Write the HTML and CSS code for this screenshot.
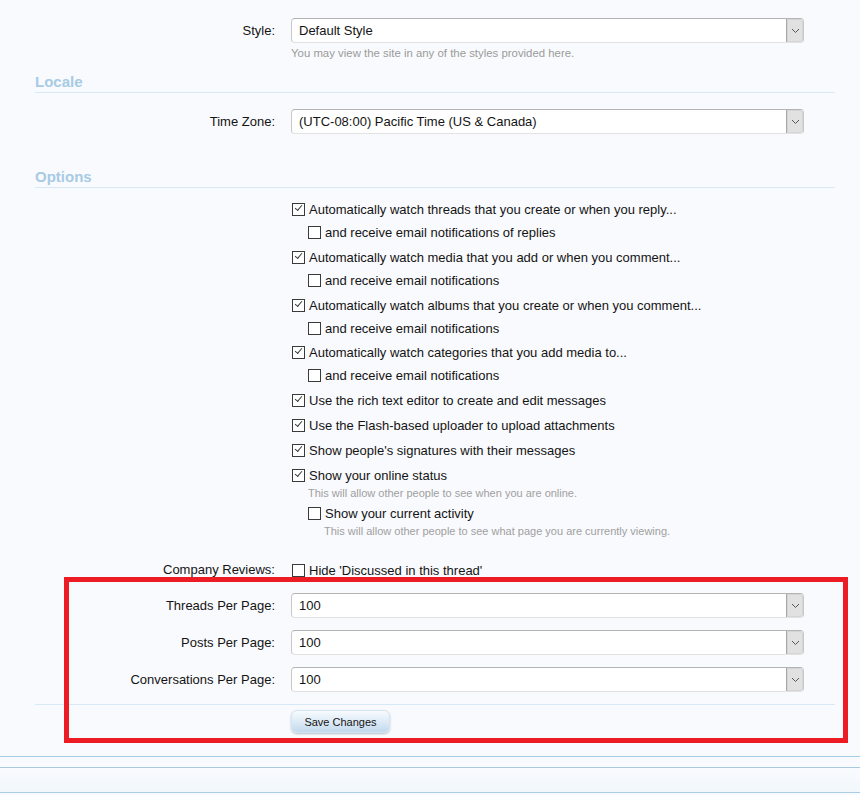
FILE: index.html
```html
<!DOCTYPE html>
<html lang="en">
<head>
<meta charset="utf-8">
<title>Preferences</title>
<link rel="stylesheet" href="styles.css">
</head>
<body>
<div class="page">
  <form class="prefs">
    <div class="row row-style">
      <div class="label">Style:</div>
      <div class="control">
        <div class="select"><span class="value">Default Style</span><span class="arrow"><svg width="9" height="6" viewBox="0 0 9 6"><path d="M1 1 L4.5 4.5 L8 1" fill="none" stroke="#555" stroke-width="1"/></svg></span></div>
        <p class="explain">You may view the site in any of the styles provided here.</p>
      </div>
    </div>

    <h3 class="section">Locale</h3>

    <div class="row row-tz">
      <div class="label">Time Zone:</div>
      <div class="control">
        <div class="select"><span class="value">(UTC-08:00) Pacific Time (US &amp; Canada)</span><span class="arrow"><svg width="9" height="6" viewBox="0 0 9 6"><path d="M1 1 L4.5 4.5 L8 1" fill="none" stroke="#555" stroke-width="1"/></svg></span></div>
      </div>
    </div>

    <h3 class="section section-options">Options</h3>

    <div class="row row-options">
      <div class="label"></div>
      <ul class="checks">
        <li class="check on"><span class="box"></span>Automatically watch threads that you create or when you reply...</li>
        <li class="check sub"><span class="box"></span>and receive email notifications of replies</li>
        <li class="check on"><span class="box"></span>Automatically watch media that you add or when you comment...</li>
        <li class="check sub"><span class="box"></span>and receive email notifications</li>
        <li class="check on"><span class="box"></span>Automatically watch albums that you create or when you comment...</li>
        <li class="check sub tight"><span class="box"></span>and receive email notifications</li>
        <li class="check on"><span class="box"></span>Automatically watch categories that you add media to...</li>
        <li class="check sub"><span class="box"></span>and receive email notifications</li>
        <li class="check on"><span class="box"></span>Use the rich text editor to create and edit messages</li>
        <li class="check on"><span class="box"></span>Use the Flash-based uploader to upload attachments</li>
        <li class="check on"><span class="box"></span>Show people's signatures with their messages</li>
        <li class="check on"><span class="box"></span>Show your online status</li>
        <li class="hint">This will allow other people to see when you are online.</li>
        <li class="check sub activity"><span class="box"></span>Show your current activity</li>
        <li class="hint sub">This will allow other people to see what page you are currently viewing.</li>
      </ul>
    </div>

    <div class="row row-reviews">
      <div class="label">Company Reviews:</div>
      <div class="control">
        <div class="check"><span class="box"></span>Hide 'Discussed in this thread'</div>
      </div>
    </div>

    <div class="row row-num">
      <div class="label">Threads Per Page:</div>
      <div class="control">
        <div class="select"><span class="value">100</span><span class="arrow"><svg width="9" height="6" viewBox="0 0 9 6"><path d="M1 1 L4.5 4.5 L8 1" fill="none" stroke="#555" stroke-width="1"/></svg></span></div>
      </div>
    </div>
    <div class="row row-num">
      <div class="label">Posts Per Page:</div>
      <div class="control">
        <div class="select"><span class="value">100</span><span class="arrow"><svg width="9" height="6" viewBox="0 0 9 6"><path d="M1 1 L4.5 4.5 L8 1" fill="none" stroke="#555" stroke-width="1"/></svg></span></div>
      </div>
    </div>
    <div class="row row-num">
      <div class="label">Conversations Per Page:</div>
      <div class="control">
        <div class="select"><span class="value">100</span><span class="arrow"><svg width="9" height="6" viewBox="0 0 9 6"><path d="M1 1 L4.5 4.5 L8 1" fill="none" stroke="#555" stroke-width="1"/></svg></span></div>
      </div>
    </div>

    <div class="submit">
      <div class="label"></div>
      <button type="button" class="button">Save Changes</button>
    </div>
  </form>

  <div class="footer-rule"></div>
  <div class="footer-band"></div>

  <div class="highlight"></div>
</div>
</body>
</html>
```

FILE: styles.css
```css
html, body {
  margin: 0;
  padding: 0;
  background: #f9fafd;
}

body {
  font-family: "Liberation Sans", Arial, sans-serif;
  font-size: 13px;
  color: #141414;
}

.page {
  position: relative;
  width: 860px;
  height: 795px;
  overflow: hidden;
}

.prefs {
  padding: 18px 25px 0 35px;
}

.row {
  display: grid;
  grid-template-columns: 240px 1fr;
  column-gap: 16px;
  align-items: start;
}

.label {
  text-align: right;
  line-height: 25px;
}

.control {
  width: 513px;
}

/* drop-down boxes */
.select {
  display: flex;
  height: 25px;
  box-sizing: border-box;
  background: #fff;
  border: 1px solid #c8c8c8;
  border-top-color: #b4b4b4;
  border-bottom-color: #e2e2e2;
  border-radius: 4px;
  overflow: hidden;
}

.select .value {
  flex: 1;
  line-height: 23px;
  padding-left: 7px;
}

.select .arrow {
  width: 16px;
  display: flex;
  align-items: center;
  justify-content: center;
  background: #e1e1e1;
  border-left: 1px solid #a8a8a8;
  border-radius: 0 3px 3px 0;
  box-shadow: inset 0 0 0 1px #d4d4d4;
}

.explain {
  margin: 3px 0 0;
  font-size: 11.4px;
  line-height: 14px;
  color: #9a9a9a;
}

.section {
  margin: 13px 0 0;
  font-size: 15px;
  font-weight: bold;
  line-height: 18px;
  color: #a7cbe5;
  padding-bottom: 1px;
  border-bottom: 1px solid #d7e8f6;
  width: 800px;
}

.row-tz {
  margin-top: 16px;
}

.section-options {
  margin-top: 34px;
}

/* checkbox list */
.checks {
  list-style: none;
  margin: 13px 0 0;
  padding: 0;
}

.check {
  display: flex;
  align-items: center;
  line-height: 17px;
  margin-bottom: 8px;
  white-space: nowrap;
}

.check.sub {
  padding-left: 16px;
  margin-top: -2px;
}

.check.sub.tight {
  margin-bottom: 7px;
}

.box {
  width: 11px;
  height: 11px;
  border: 1px solid #3a3a3a;
  background: #fff;
  margin: 0 4px 0 1px;
  flex: none;
  position: relative;
}

.check.on .box::after {
  content: "";
  position: absolute;
  left: 2px;
  top: 1px;
  width: 6px;
  height: 3px;
  border-left: 1px solid #3a3a3a;
  border-bottom: 1px solid #3a3a3a;
  transform: rotate(-50deg);
  transform-origin: center;
}

.hint {
  font-size: 11px;
  line-height: 14px;
  color: #a0a0a0;
  margin: -6px 0 5px;
  padding-left: 17px;
}

.check.activity {
  margin-top: 0;
}

.hint.sub {
  padding-left: 33px;
  margin-top: -6px;
}

.row-reviews {
  margin-top: 18px;
}

.row-reviews .label {
  line-height: 17px;
}

.row-reviews .check {
  margin: 1px 0 0;
}

.row-num {
  margin-top: 12px;
}

.row-reviews + .row-num {
  margin-top: 14px;
}

.submit {
  display: grid;
  grid-template-columns: 240px auto;
  column-gap: 16px;
  justify-content: start;
  margin-top: 12px;
  width: 800px;
  border-top: 1px solid #d7e8f6;
  padding-top: 5px;
}

.button {
  font-family: "Liberation Sans", Arial, sans-serif;
  font-size: 11px;
  color: #141414;
  width: 99px;
  height: 23px;
  border: 1px solid #d4e4f0;
  border-radius: 6px;
  background: linear-gradient(#f7fbfe, #e1edf7 45%, #c1d9ec);
  box-shadow: 0 1px 2px rgba(90, 120, 150, 0.45);
  padding: 0;
}

/* page footer */
.footer-rule {
  margin-top: 23px;
  height: 0;
  border-top: 1px solid #a6cde6;
}

.footer-band {
  margin-top: 10px;
  height: 24px;
  border-top: 1px solid #a9c9dd;
  border-bottom: 1px solid #a9cde6;
  background: linear-gradient(#f9fbfe, #f1f7fc);
}

/* red outline drawn over the per-page settings */
.highlight {
  position: absolute;
  left: 64px;
  top: 577px;
  width: 774px;
  height: 156px;
  border: 5px solid #ed1c24;
  pointer-events: none;
}
```
